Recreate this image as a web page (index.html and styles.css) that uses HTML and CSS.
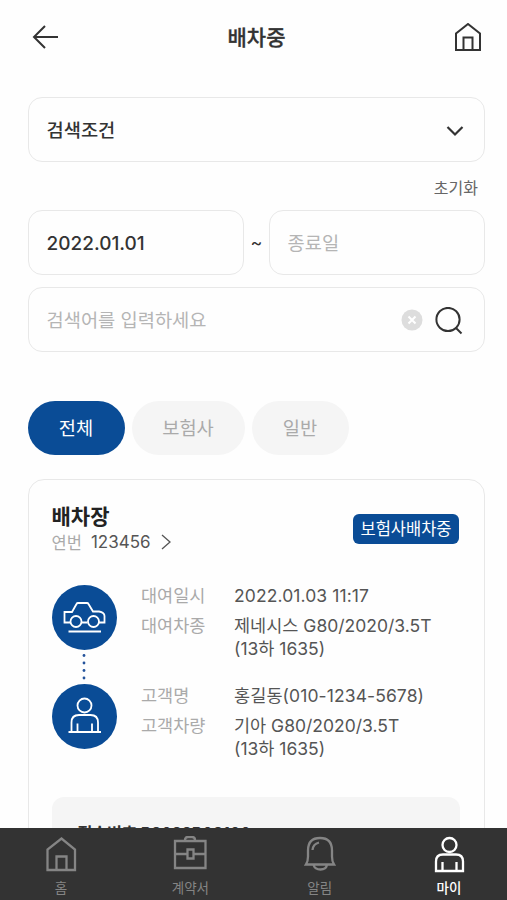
FILE: index.html
```html
<!DOCTYPE html>
<html lang="ko">
<head>
<meta charset="utf-8">
<meta name="viewport" content="width=device-width, initial-scale=1">
<title>배차중</title>
<link rel="stylesheet" href="styles.css">
</head>
<body>
<div class="app">
  <header class="header">
    <svg class="back" viewBox="0 0 26 26" width="26" height="26"><path d="M26 12H2M13 1 2 12l11 11"/></svg>
    <h1 class="title">배차중</h1>
    <svg class="home" viewBox="0 0 28 30" width="28" height="30"><path d="M2 27V10.500L14 1l12 9.500V27zM9.500 27V14.500h9V27"/></svg>
  </header>
  <main class="content">
    <div class="field condition">
      <span>검색조건</span>
      <svg class="chevron" viewBox="0 0 18 12" width="18" height="12"><path d="m1.500 2 7.500 7.500L16.500 2"/></svg>
    </div>
    <div class="reset">초기화</div>
    <div class="dates">
      <div class="field date">2022.01.01</div>
      <span class="tilde">~</span>
      <div class="field hint">종료일</div>
    </div>
    <div class="field search hint">
      <span class="query">검색어를 입력하세요</span>
      <svg class="clear" viewBox="0 0 22 22" width="22" height="22"><circle cx="11" cy="11" r="10.500"/><path d="m7.500 7.500 7 7m0-7-7 7"/></svg>
      <svg class="lens" viewBox="0 0 28 28" width="28" height="28"><circle cx="13" cy="12.500" r="11.600"/><path d="m20.500 20.500 6 6"/></svg>
    </div>
    <div class="tabs">
      <span class="tab active">전체</span>
      <span class="tab wide">보험사</span>
      <span class="tab">일반</span>
    </div>
    <section class="card">
      <div class="card-head">
        <div>
          <h2 class="name">배차장</h2>
          <div class="serial"><span class="muted">연번</span><span class="number">123456</span><svg viewBox="0 0 10 16" width="10" height="16"><path d="m1 1 8 7-8 7"/></svg></div>
        </div>
        <span class="badge">보험사배차중</span>
      </div>
      <div class="details">
        <div class="rail">
          <svg class="disc" viewBox="0 0 65 65" width="65" height="65"><circle class="fill" cx="32.500" cy="32.500" r="32.500"/><path d="M18.500 37.500h-6V27H20l4.500-8q.5-1 1.500-1h9q1 0 1.500 1l4.500 7.500h6q5.500 1 5.500 4.500v6.500H47M29.500 37.500h6M16.500 46.500h32.500"/><circle cx="24" cy="36.500" r="5.500"/><circle cx="41.500" cy="36.500" r="5.500"/></svg>
          <svg class="dots" viewBox="0 0 4 35" width="4" height="35"><circle cx="2" cy="5.500" r="1.400"/><circle cx="2" cy="13" r="1.400"/><circle cx="2" cy="20.500" r="1.400"/><circle cx="2" cy="28" r="1.400"/></svg>
          <svg class="disc" viewBox="0 0 65 65" width="65" height="65"><circle class="fill" cx="32.500" cy="32.500" r="32.500"/><circle cx="32.500" cy="21.500" r="7"/><path d="M19.500 48v-9.500q0-7.500 7.500-7.500h11.500q7.500 0 7.500 7.500V48M25.500 48v-8.500M40 48v-8.500M16.500 48h32.500"/></svg>
        </div>
        <dl class="facts">
          <dt>대여일시</dt><dd class="when">2022.01.03 11:17</dd>
          <dt>대여차종</dt><dd class="group-end">제네시스 G80/2020/3.5T<br>(13하 1635)</dd>
          <dt>고객명</dt><dd class="when">홍길동(010-1234-5678)</dd>
          <dt>고객차량</dt><dd>기아 G80/2020/3.5T<br>(13하 1635)</dd>
        </dl>
      </div>
      <div class="receipt">접수번호 B2022B02100</div>
    </section>
  </main>
  <nav class="nav">
    <a class="item"><svg viewBox="0 0 34 38" width="34" height="38"><path d="M3.500 34V13.500L17.500 2.500l13.500 11V34zM12.500 34V20.500h10V34"/></svg><span>홈</span></a>
    <a class="item"><svg viewBox="0 0 34 38" width="34" height="38"><path d="M2 5h30.500v27H2zM2 18h12M21 18h12M14.500 13.500h6v9h-6zM12 5V4q0-3 3-3h4q3 0 3 3v1"/></svg><span>계약서</span></a>
    <a class="item"><svg viewBox="0 0 34 38" width="34" height="38"><path d="M3 28.500q2-3 2-8v-6Q5 2 17 2t12 12.500v6q0 5 2 8zM10.500 29q1.500 4.500 7 4.500T24 29M9.500 14q.5-6 6.500-7.500"/></svg><span>알림</span></a>
    <a class="item on"><svg viewBox="0 0 34 38" width="34" height="38"><circle cx="17.500" cy="9" r="7"/><path d="M4 35V25.500q0-7 7-7h13q7 0 7 7V35zM10.500 35v-9M24.500 35v-9"/></svg><span>마이</span></a>
  </nav>
</div>
</body>
</html>
```
FILE: styles.css
```css
* { box-sizing: border-box; }
body {
  margin: 0;
  background: #fefefe;
  color: #333;
  font-family: Inter, "Noto Sans CJK KR", sans-serif;
}
svg { display: block; flex: none; fill: none; stroke: currentColor; stroke-width: 2; }
.app { display: flex; flex-direction: column; height: 900px; overflow: hidden; }
.header { display: flex; flex: none; align-items: center; justify-content: space-between; height: 76px; padding: 0 25px 0 32px; }
.title { margin: 0 0 0 1px; font-size: 21px; font-weight: 500; line-height: 30px; -webkit-text-stroke: .3px; }
.content { flex: 1; min-height: 0; padding: 21px 22px 0 28px; overflow: hidden; }
.field {
  display: flex; align-items: center; height: 65px; padding: 2px 18px 0 17.500px;
  border: 1.500px solid #e8e8e8; border-radius: 14px;
  font-size: 18.700px; font-weight: 500; line-height: 28px;
}
.condition { justify-content: space-between; padding-right: 20px; }
.chevron { stroke-width: 2.200; }
.date { font-size: 19px; }
.reset { height: 48px; padding: 14px 7px 0 0; text-align: right; font-size: 16px; line-height: 24px; color: #666; }
.dates { display: grid; grid-template-columns: 216px 25px 216px; align-items: center; }
.tilde { text-align: center; font-size: 18px; }
.hint { color: #b5b5b5; font-weight: 400; }
.search { margin-top: 12px; padding-right: 21px; }
.query { flex: 1; }
.clear { margin: -2px 12px 0 0; stroke: #fff; }
.clear circle { fill: #ddd; stroke: none; }
.lens { color: #333; }
.tabs { display: flex; gap: 7px; margin-top: 49px; }
.tab { display: flex; align-items: center; justify-content: center; width: 97px; height: 54px; padding: 0 1px 3px 0; border-radius: 27px; background: #f5f5f5; color: #aaa; font-size: 18.700px; }
.wide { width: 113px; }
.active { background: #0a4c96; color: #fff; }
.card { height: 500px; margin-top: 24px; padding: 22px 25px 22px 22.500px; border: 1.500px solid #e8e8e8; border-radius: 16px; }
.card-head { display: flex; justify-content: space-between; }
.name { margin: 0; font-size: 21px; line-height: 30px; font-weight: 700; color: #222; }
.serial { display: flex; align-items: center; height: 19px; margin-bottom: 4px; font-size: 16.500px; color: #555; }
.serial svg { stroke-width: 1.300; }
.muted { margin-right: 9px; color: #aaa; }
.number { margin-right: 10px; font-size: 17px; }
.badge { width: 106px; height: 30px; margin-top: 11.500px; border-radius: 6px; background: #0a4c96; color: #fff; font-size: 16.500px; line-height: 30px; text-align: center; white-space: nowrap; }
.details { display: flex; margin-top: 30px; }
.rail { width: 65px; }
.disc { color: #fff; stroke-width: 1.800; }
.disc .fill { fill: #0a4c96; stroke: none; }
.dots { margin: -.5px auto -.5px; fill: #24539b; stroke: none; }
.facts { display: grid; grid-template-columns: 93px 1fr; align-content: start; row-gap: 7px; margin: -1px 0 0 24.500px; font-size: 17.500px; line-height: 23px; }
.facts dt { color: #aaa; }
.facts dd { margin: 0; color: #555; white-space: nowrap; }
.facts .when { letter-spacing: .1px; }
.facts .group-end { margin-bottom: 16.500px; }
.receipt { height: 120px; margin: 37px -1px 0 0; padding: 24px 26px; border-radius: 12px; background: #f5f5f5; font-size: 16.200px; font-weight: 600; line-height: 24px; letter-spacing: -.1px; }
.nav { display: grid; flex: none; grid-template-columns: repeat(4, 129.300px); justify-content: center; height: 72px; padding-left: 3px; background: #333; }
.item { display: flex; flex-direction: column; align-items: center; padding-top: 8px; color: #858585; font-size: 13.500px; line-height: 18px; }
.item svg { stroke-width: 2.300; }
.item span { margin-top: 5px; }
.on { color: #fff; font-weight: 500; }
```
